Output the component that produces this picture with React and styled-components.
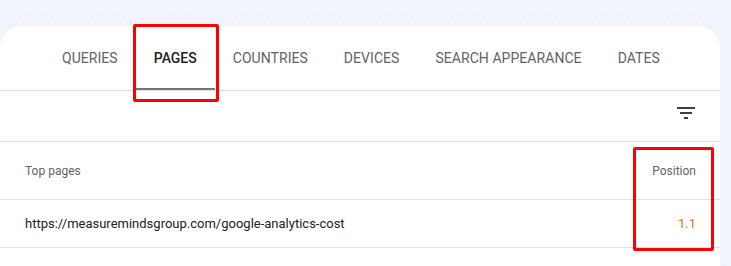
import React from 'react';
import styled, { createGlobalStyle } from 'styled-components';

const GlobalStyle = createGlobalStyle`
	html, body {
		margin: 0;
		padding: 0;
	}
	body {
		width: 731px;
		height: 266px;
		overflow: hidden;
		background-color: #f1f4fc;
		background-image: radial-gradient(circle, #e1e6f2 0.8px, transparent 1.1px);
		background-size: 9px 9px;
		font-family: Roboto, 'Liberation Sans', sans-serif;
	}
`;

const Page = styled.div`
	position: relative;
	padding-top: 26px;
	height: 240px;
`;

const Card = styled.div`
	width: 720px;
	height: 240px;
	background: #ffffff;
	border-radius: 22px 22px 0 0;
`;

const Tabs = styled.div`
	display: flex;
	height: 64px;
	padding-left: 44px;
	border-bottom: 1px solid #e0e0e0;
`;

const Tab = styled.div`
	display: flex;
	align-items: center;
	padding: 2px 18px 0;
	font-size: 14px;
	letter-spacing: ${props => (props.active ? '0' : '0.05px')};
	font-weight: ${props => (props.active ? 500 : 400)};
	text-transform: uppercase;
	color: ${props => (props.active ? '#202124' : '#5f6368')};
	border-bottom: 2px solid ${props => (props.active ? '#757575' : 'transparent')};
`;

const Toolbar = styled.div`
	display: flex;
	justify-content: flex-end;
	height: 51px;
	padding: 10px 22px 0 0;
	box-sizing: border-box;
	border-bottom: 1px solid #e0e0e0;
`;

const IconButton = styled.span`
	display: block;
	width: 24px;
	height: 24px;
	color: #3c4043;
`;

const Row = styled.div`
	display: flex;
	align-items: center;
	justify-content: space-between;
	height: ${props => (props.head ? '57px' : '47px')};
	padding: 0 24px 0 25px;
	border-bottom: 1px solid #e0e0e0;
	font-size: ${props => (props.head ? '12px' : '13px')};
	color: ${props => (props.head ? '#5f6368' : '#202124')};
`;

const Value = styled.span`
	color: ${props => props.color || 'inherit'};
`;

const Highlight = styled.div`
	position: absolute;
	border: 3px solid #ff0000;
	border-radius: 2px;
	box-sizing: border-box;
`;

const tabs = ['Queries', 'Pages', 'Countries', 'Devices', 'Search appearance', 'Dates'];

export default function App() {
	return (
		<>
			<GlobalStyle />
			<Page>
				<Card>
					<Tabs>
						{tabs.map(t => (
							<Tab key={t} active={t === 'Pages'}>
								{t}
							</Tab>
						))}
					</Tabs>
					<Toolbar>
						<IconButton>
							<svg width="24" height="24" viewBox="0 0 24 24" fill="currentColor">
								<path d="M10 18h4v-2h-4v2zM3 6v2h18V6H3zm3 7h12v-2H6v2z" />
							</svg>
						</IconButton>
					</Toolbar>
					<Row head>
						<span>Top pages</span>
						<span>Position</span>
					</Row>
					<Row>
						<span>https://measuremindsgroup.com/google-analytics-cost</span>
						<Value color="#e8710a">1.1</Value>
					</Row>
				</Card>
				<Highlight style={{ left: 133, top: 24, width: 86, height: 78 }} />
				<Highlight style={{ left: 633, top: 147, width: 81, height: 104 }} />
			</Page>
		</>
	);
}
